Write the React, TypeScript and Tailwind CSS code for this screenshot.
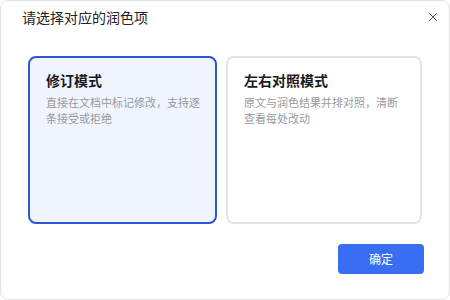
import { X } from "lucide-react";

const font = { fontFamily: '"Noto Sans CJK SC", "Noto Sans", sans-serif' };

export default function App() {
  return (
    <div
      className="w-[450px] h-[300px] bg-white border border-[#e2e2e2] rounded-[8px] flex flex-col overflow-hidden"
      style={font}
    >
      {/* Header */}
      <div className="h-[32px] flex items-center justify-between pl-[21px] pr-[9px]">
        <span className="text-[14px] text-[#222] leading-none">请选择对应的润色项</span>
        <X className="w-[14px] h-[14px] text-[#333]" strokeWidth={1.4} />
      </div>

      {/* Options */}
      <div className="flex gap-[9px] pl-[27px] mt-[23px]">
        <div className="w-[189px] h-[168px] rounded-[8px] border-2 border-[#2f56d0] bg-[#eff4ff] pl-[16px] pr-[10px] pt-[11px]">
          <h3 className="text-[14px] font-bold text-[#1a1a1a] leading-[22px]">修订模式</h3>
          <p className="mt-[3px] text-[11px] leading-[16px] text-[#9a9a9a]">
            直接在文档中标记修改，支持逐条接受或拒绝
          </p>
        </div>
        <div className="w-[196px] h-[168px] rounded-[8px] border-2 border-[#e4e4e4] bg-white pl-[16px] pr-[16px] pt-[11px]">
          <h3 className="text-[14px] font-bold text-[#1a1a1a] leading-[22px]">左右对照模式</h3>
          <p className="mt-[3px] text-[11px] leading-[16px] text-[#9a9a9a]">
            原文与润色结果并排对照，清断查看每处改动
          </p>
        </div>
      </div>

      {/* Footer */}
      <div className="flex justify-end pr-[25px] mt-[20px]">
        <button className="w-[86px] h-[30px] rounded-[4px] bg-[#3a6ef2] text-white text-[12px]">
          确定
        </button>
      </div>
    </div>
  );
}
